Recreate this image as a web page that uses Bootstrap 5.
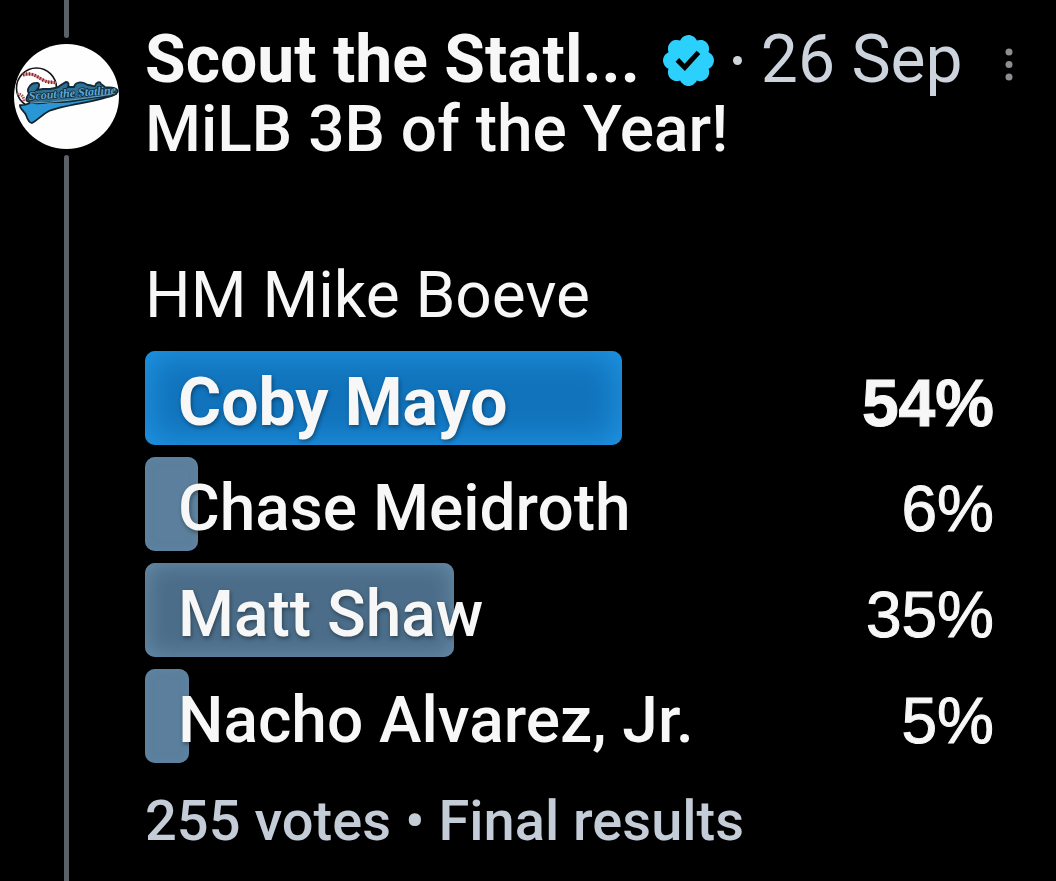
<!DOCTYPE html>
<html lang="en">
<head>
<meta charset="utf-8">
<meta name="viewport" content="width=device-width, initial-scale=1">
<title>MiLB 3B of the Year poll</title>
<link href="https://cdn.jsdelivr.net/npm/bootstrap@5.3.0/dist/css/bootstrap.min.css" rel="stylesheet">
<style>
  body { background: #000; color: #f7f7f7; font-family: Roboto, "Liberation Sans", sans-serif; font-size: 64px; line-height: 70px; }
  .rail { width: 133px; }
  .thread-line { width: 5px; background: #5b6166; }
  .thread-top { height: 38px; }
  .avatar { width: 105px; height: 105px; margin: 6px 0; }
  .post-main { padding: 25px 28px 20px 12px; }
  .post-head { font-size: 66px; }
  .author { color: #f7f7f7; }
  .verified { width: 51px; height: 51px; margin-left: 23px; }
  .sep-dot { width: 9px; height: 9px; margin: 0 19px; background: #cfd5dd; }
  .post-date { color: #ccd3dc; }
  .more { color: #8e8e92; width: 32px; height: 48px; margin: 8px 3px 0 0; }
  .post-text { margin-bottom: 96px; }
  .poll { margin-top: 20px; gap: 12px; }
  .option { height: 94px; padding: 10px 34px 0 33px; }
  .fill { border-radius: 10px; background: #4b6d89; box-shadow: inset 0 0 22px 2px #668ba8; }
  .fill.narrow { background: #5b7f9c; box-shadow: inset 0 0 8px #6186a3; }
  .leading .fill { background: #1173bb; box-shadow: inset 0 0 34px 4px #2095e4; }
  .choice { text-shadow: 1px 2px 4px rgba(0, 0, 0, .4); }
  .leading .choice { font-size: 66px; }
  .medium { font-weight: 500; }
  .pct { font-family: "Liberation Sans", Arial, sans-serif; -webkit-text-stroke: 1px currentColor; }
  .leading .pct { font-size: 66px; }
  .totals { margin-top: 23px; font-size: 56px; color: #c3ccd7; }
</style>
</head>
<body>
<article class="d-flex min-vh-100">
  <div class="rail d-flex flex-column align-items-center flex-shrink-0">
    <div class="thread-line thread-top rounded-bottom"></div>
    <svg class="avatar flex-shrink-0" viewBox="0 0 105 105" role="img" aria-label="Team script logo over a baseball">
      <defs>
        <clipPath id="disc"><circle cx="52.5" cy="52.5" r="52.5"/></clipPath>
      </defs>
      <g clip-path="url(#disc)">
        <rect width="105" height="105" fill="#fefefe"/>
        <circle cx="22.5" cy="44" r="20" fill="#fff" stroke="#161616" stroke-width="1.6"/>
        <path d="M9 31C18 28 22 32 29 36S38 37 42 39" fill="none" stroke="#d4898a" stroke-width="3"/>
        <path d="M9 31C18 28 22 32 29 36S38 37 42 39" fill="none" stroke="#7c2028" stroke-width="3.4" stroke-dasharray="1 2"/>
        <path d="M3 50C8 50 10 53 10 58" fill="none" stroke="#a94a50" stroke-width="3" stroke-dasharray="1.4 1"/>
        <path d="M6 61C10 62 14 60 18 58Q54 55 102 50C86 58 52 60 35 67C27 71 24 76 18 79C15 79 13 74 12 71C10 67 5 64 6 61Z" fill="#2b96d6" stroke="#13232c" stroke-width="1.8" stroke-linejoin="round"/>
        <path d="M13 57C11 54 14 52 15 49C12 46 16 39 22 39C27 38 25 44 23 46L29 45 36 45 41 44C44 44 45 43 47 41L52 38C55 38 55 41 54 43L60 43C61 38 66 38 70 39L74 41C78 41 80 43 81 42C82 38 86 37 87 40L91 43C95 44 101 42 104 47C102 53 91 53 78 54Q50 59 35 58C25 60 18 60 13 57Z" fill="#2f7196" stroke="#132a38" stroke-width="1.8"/>
        <text x="15" y="56" transform="rotate(-4 15 56)" font-family="'Liberation Serif', serif" font-style="italic" font-weight="700" font-size="12" fill="#5fa9d3" stroke="#0f2733" stroke-width="1.6" paint-order="stroke">Scout the Statline</text>
        <path d="M16 59Q54 58 98 50" fill="none" stroke="#8eb9cc" stroke-width=".8"/>
      </g>
    </svg>
    <div class="thread-line rounded-top flex-grow-1"></div>
  </div>

  <div class="post-main flex-grow-1">
    <header class="post-head d-flex align-items-center text-nowrap">
      <a class="author fw-bold text-decoration-none" href="#">Scout the Statl...</a>
      <svg class="verified flex-shrink-0" viewBox="1.6 1.6 18.8 18.8" role="img" aria-label="Verified">
        <path fill="#2cd0fc" fill-rule="evenodd" d="M20.396 11c-.018-.646-.215-1.275-.57-1.816-.354-.54-.852-.972-1.438-1.246.223-.607.27-1.264.14-1.897-.131-.634-.437-1.218-.882-1.687-.47-.445-1.053-.75-1.687-.882-.633-.13-1.29-.083-1.897.14-.273-.587-.704-1.086-1.245-1.44S11.647 1.62 11 1.604c-.646.017-1.273.213-1.813.568s-.969.854-1.24 1.44c-.608-.223-1.267-.272-1.902-.14-.635.13-1.22.436-1.69.882-.445.47-.749 1.055-.878 1.688-.13.633-.08 1.29.144 1.896-.587.274-1.087.705-1.443 1.245-.356.54-.555 1.17-.574 1.817.02.647.218 1.276.574 1.817.356.54.856.972 1.443 1.245-.224.606-.274 1.263-.144 1.896.13.634.433 1.218.877 1.688.47.443 1.054.747 1.687.878.633.132 1.29.084 1.897-.136.274.586.705 1.084 1.246 1.439.54.354 1.17.551 1.816.569.647-.016 1.276-.213 1.817-.567s.972-.854 1.245-1.44c.604.239 1.266.296 1.903.164.636-.132 1.22-.447 1.68-.907.46-.46.776-1.044.908-1.681s.075-1.299-.165-1.903c.586-.274 1.084-.705 1.439-1.246.354-.54.551-1.17.569-1.816zM9.662 14.85l-3.429-3.428 1.293-1.302 2.072 2.072 4.4-4.794 1.347 1.246z"/>
      </svg>
      <span class="sep-dot rounded-circle flex-shrink-0"></span>
      <time class="post-date" datetime="09-26">26 Sep</time>
      <button type="button" class="more btn border-0 p-0 ms-auto d-flex align-items-center justify-content-center" aria-label="More options">
        <svg width="8" height="34" viewBox="0 0 8 34" fill="currentColor" aria-hidden="true"><circle cx="4" cy="5" r="3.5"/><circle cx="4" cy="17.5" r="3.5"/><circle cx="4" cy="30" r="3.5"/></svg>
      </button>
    </header>

    <p class="post-text medium">MiLB 3B of the Year!</p>
    <p class="mb-0">HM Mike Boeve</p>

    <ul class="poll list-unstyled mb-0 d-flex flex-column">
      <li class="option leading position-relative d-flex align-items-center justify-content-between">
        <span class="fill position-absolute top-0 start-0 h-100" style="width:54%"></span>
        <span class="choice position-relative fw-bold">Coby Mayo</span>
        <span class="pct fw-bold">54%</span>
      </li>
      <li class="option position-relative d-flex align-items-center justify-content-between">
        <span class="fill narrow position-absolute top-0 start-0 h-100" style="width:6%"></span>
        <span class="choice position-relative medium">Chase Meidroth</span>
        <span class="pct medium">6%</span>
      </li>
      <li class="option position-relative d-flex align-items-center justify-content-between">
        <span class="fill position-absolute top-0 start-0 h-100" style="width:35%"></span>
        <span class="choice position-relative medium">Matt Shaw</span>
        <span class="pct medium">35%</span>
      </li>
      <li class="option position-relative d-flex align-items-center justify-content-between">
        <span class="fill narrow position-absolute top-0 start-0 h-100" style="width:5%"></span>
        <span class="choice position-relative medium">Nacho Alvarez, Jr.</span>
        <span class="pct medium">5%</span>
      </li>
    </ul>

    <p class="totals mb-0 medium">255 votes • Final results</p>
  </div>
</article>
<script src="https://cdn.jsdelivr.net/npm/bootstrap@5.3.0/dist/js/bootstrap.bundle.min.js"></script>
</body>
</html>
